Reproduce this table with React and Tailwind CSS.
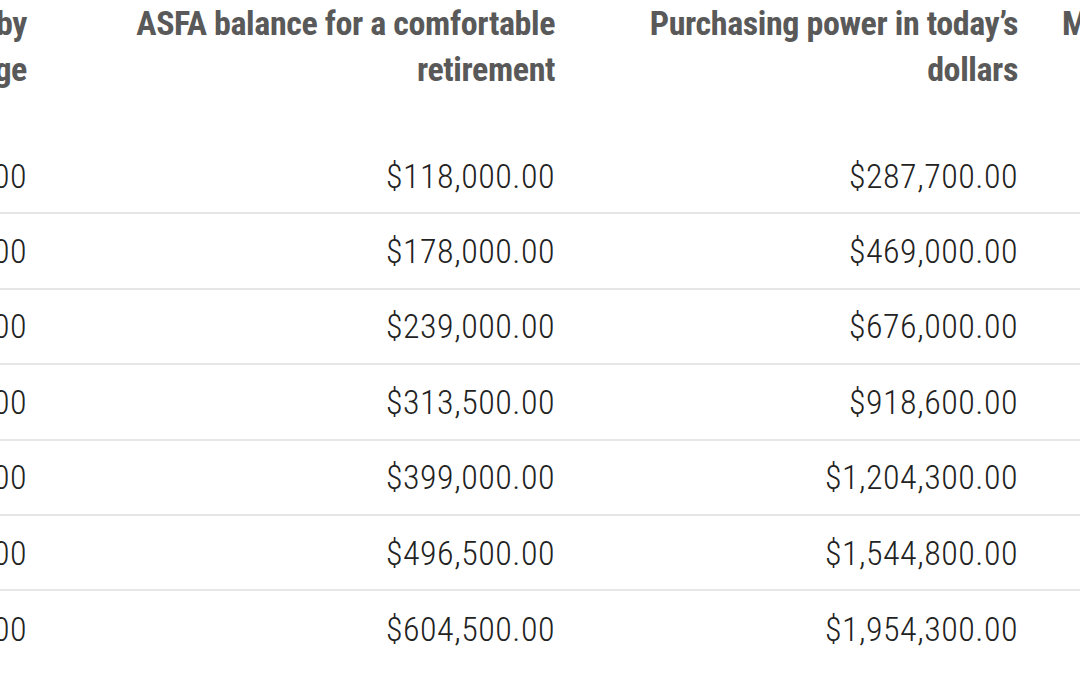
const rows = [
  ["$45,000.00", "$118,000.00", "$287,700.00", "$70,000.00"],
  ["$68,000.00", "$178,000.00", "$469,000.00", "$100,000.00"],
  ["$92,000.00", "$239,000.00", "$676,000.00", "$140,000.00"],
  ["$120,000.00", "$313,500.00", "$918,600.00", "$180,000.00"],
  ["$153,000.00", "$399,000.00", "$1,204,300.00", "$230,000.00"],
  ["$190,000.00", "$496,500.00", "$1,544,800.00", "$285,000.00"],
  ["$231,000.00", "$604,500.00", "$1,954,300.00", "$345,000.00"],
];

const gridCols = "grid grid-cols-[300px_528px_463px_300px]";

export default function App() {
  return (
    <div
      className="w-[1080px] h-[675px] overflow-hidden bg-white"
      style={{ fontFamily: '"Roboto Condensed", Roboto, sans-serif' }}
    >
      <div className="ml-[-251px] w-[1591px]">
        <div className={`${gridCols} h-[139px] items-start text-[34px] leading-[46px] font-bold tracking-[-0.4px] text-[#595959]`}>
          <div className="px-[22px] text-right">Balance needed by age</div>
          <div className="px-[22px] text-right">ASFA balance for a comfortable retirement</div>
          <div className="px-[22px] text-right">Purchasing power in today’s dollars</div>
          <div className="px-[22px] text-left whitespace-nowrap">Modest</div>
        </div>
        {rows.map((row, i) => (
          <div
            key={i}
            className={`${gridCols} h-[75.4px] items-center text-[34px] leading-[40px] font-light tracking-[0.5px] text-[#222] ${
              i < rows.length - 1 ? "border-b-2 border-[#e6e6e6]" : ""
            }`}
          >
            {row.map((v, j) => (
              <div key={j} className="px-[22px] text-right">
                {v}
              </div>
            ))}
          </div>
        ))}
      </div>
    </div>
  );
}
